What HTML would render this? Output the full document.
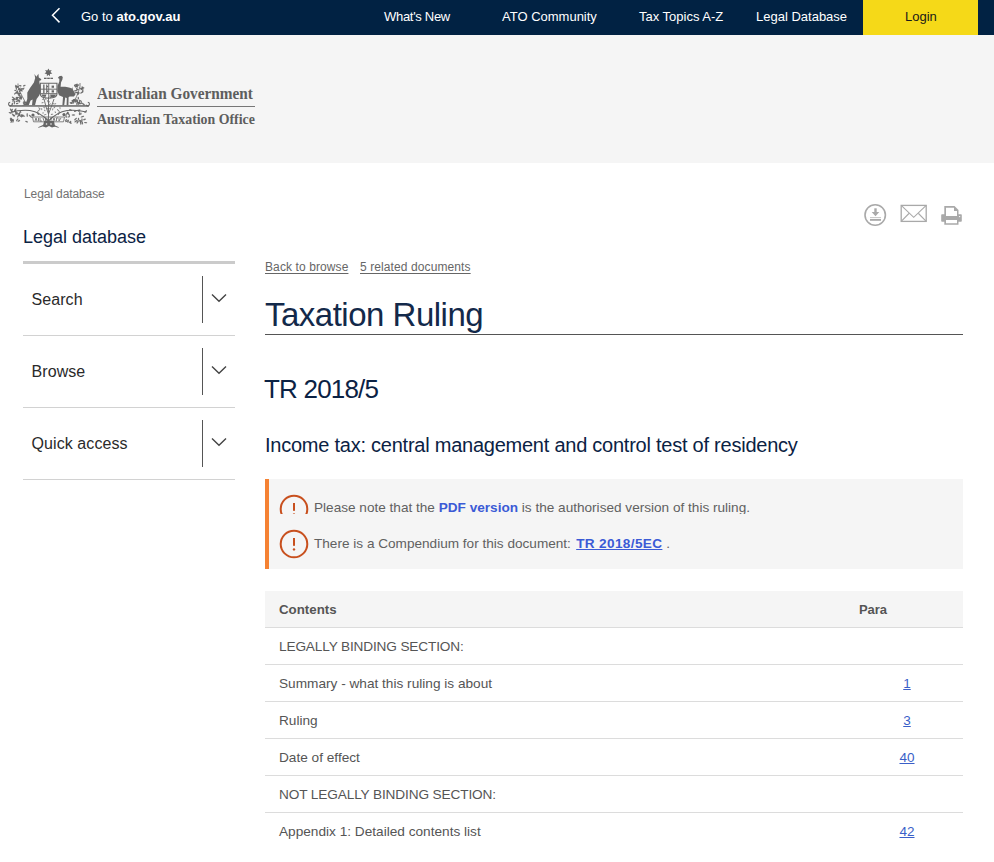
<!DOCTYPE html>
<html><head><meta charset="utf-8">
<style>
*{margin:0;padding:0;box-sizing:border-box}
html,body{width:994px;height:862px;overflow:hidden;background:#fff;font-family:"Liberation Sans",sans-serif;color:#333}
.abs{position:absolute;white-space:nowrap;line-height:1}
#nav{position:absolute;left:0;top:0;width:994px;height:35px;background:#012243}
#nav .t{position:absolute;top:10px;font-size:13px;color:#fff;line-height:13px;white-space:nowrap}
#login{position:absolute;left:863px;top:0;width:115px;height:35px;background:#f5d918}
#hdr{position:absolute;left:0;top:35px;width:994px;height:128px;background:#f5f5f5}
.acc{position:absolute;left:23px;width:212px;height:72px;border-bottom:1px solid #d2d2d2}
.acc .l{position:absolute;left:8.5px;top:28px;font-size:16px;color:#2a2a2a;letter-spacing:0.08px;line-height:16px;white-space:nowrap}
.acc .v{position:absolute;left:179px;top:12px;width:1px;height:47px;background:#555}
.acc svg{position:absolute;left:188px;top:29px}
.row{position:absolute;left:265px;width:698px;height:37px;border-bottom:1px solid #dcdcdc}
.row .c{position:absolute;left:14px;top:12px;font-size:13.65px;color:#555;line-height:14px;white-space:nowrap}
.row .p{position:absolute;left:627px;top:12px;font-size:13.5px;color:#3a5fc8;line-height:14px;text-decoration:underline;width:30px;text-align:center}
.alert{position:absolute;left:314px;font-size:13.6px;color:#616161;line-height:14px;white-space:nowrap}
.alert b{color:#3b5bd6}
</style></head><body>
<div id="nav">
  <svg class="abs" style="left:50px;top:7px" width="12" height="17" viewBox="0 0 12 17"><path d="M9.5 1.2 L2.5 8.3 L9.5 15.4" fill="none" stroke="#fff" stroke-width="1.5"/></svg>
  <div class="t" style="left:81px">Go to <b>ato.gov.au</b></div>
  <div class="t" style="left:384px;letter-spacing:-0.3px">What's New</div>
  <div class="t" style="left:502px">ATO Community</div>
  <div class="t" style="left:639px">Tax Topics A-Z</div>
  <div class="t" style="left:756px">Legal Database</div>
  <div id="login"><div class="t" style="left:42px;color:#1a1a1a">Login</div></div>
</div>
<div id="hdr">
  <svg class="abs" style="left:0;top:25px" width="100" height="75" viewBox="0 60 100 75">
 <g fill="#666">
  <polygon points="48.4,68.5 49.5,70.6 51.7,70.1 50.5,72.1 52.3,73.6 50,74 49.9,76.3 48.4,74.7 46.9,76.3 46.8,74 44.5,73.6 46.3,72.1 45.1,70.1 47.3,70.6"/>
  <rect x="44" y="77.7" width="2.6" height="1.3"/><rect x="47.2" y="77.7" width="2.6" height="1.3"/><rect x="50.4" y="77.7" width="2.6" height="1.3"/>
  <path d="M34.4,74 L36.4,76.8 L38.4,73.8 L38.8,77.4 L41.4,79.3 L40.6,80.4 L39.4,80.8 L39.4,83.2 L40.4,86 L40.6,92 L39.2,95.5 L36.6,99 L35,105.3 L32,105.3 L32.6,99.6 L30.6,100.4 L28.7,105.3 L22,105.6 L25.9,103 L27.3,99 L27.3,92.6 L30,88 L33.9,82.5 L35.2,78 Z"/>
  <path d="M57.8,78 L59.2,76.2 L61.4,75.8 L62.8,77 L62.4,79.6 L61,82.6 L60.6,86.8 L65.2,86.7 L69,87.4 L72.2,88.6 L72.4,86.4 L72.9,89.4 L75.5,94.4 L73.9,96.4 L69.7,96.6 L68.6,97.2 L68.4,105.3 L66.6,105.3 L66.8,98 L65.2,97.6 L64.2,105.3 L62.4,105.3 L63,97 L59,95.2 L57.3,91 L57.5,86 L59.3,81.6 L59.3,78.7 Z"/>
  <rect x="9.5" y="105.2" width="79.4" height="1.5"/>
  <path d="M44,121 L54,121 L55,126.5 L52,127.5 L49,126 L46,127.5 L43,126.5 Z"/>
  <path d="M44,124.5 L38,127.2 L38.6,127.8 L45,125.8 Z M53,124.5 L59,127.2 L58.4,127.8 L52,125.8 Z"/>
  <ellipse cx="18.08" cy="86.89" rx="1.25" ry="0.70" transform="rotate(117 18.08 86.89)" opacity="0.9"/>
<ellipse cx="20.09" cy="89.57" rx="1.62" ry="0.70" transform="rotate(10 20.09 89.57)" opacity="0.9"/>
<ellipse cx="15.36" cy="90.42" rx="1.27" ry="0.70" transform="rotate(13 15.36 90.42)" opacity="0.9"/>
<ellipse cx="19.03" cy="95.34" rx="1.38" ry="0.70" transform="rotate(22 19.03 95.34)" opacity="0.9"/>
<ellipse cx="20.96" cy="96.85" rx="1.53" ry="0.70" transform="rotate(104 20.96 96.85)" opacity="0.9"/>
<ellipse cx="24.27" cy="85.58" rx="1.44" ry="0.70" transform="rotate(155 24.27 85.58)" opacity="0.9"/>
<ellipse cx="16.37" cy="86.47" rx="1.88" ry="0.70" transform="rotate(56 16.37 86.47)" opacity="0.9"/>
<ellipse cx="16.72" cy="92.27" rx="1.51" ry="0.70" transform="rotate(115 16.72 92.27)" opacity="0.9"/>
<ellipse cx="20.20" cy="85.78" rx="1.37" ry="0.70" transform="rotate(11 20.20 85.78)" opacity="0.9"/>
<ellipse cx="21.46" cy="90.34" rx="1.69" ry="0.70" transform="rotate(57 21.46 90.34)" opacity="0.9"/>
<ellipse cx="19.31" cy="88.75" rx="1.78" ry="0.70" transform="rotate(143 19.31 88.75)" opacity="0.9"/>
<ellipse cx="17.32" cy="92.18" rx="1.93" ry="0.70" transform="rotate(95 17.32 92.18)" opacity="0.9"/>
<ellipse cx="21.93" cy="88.60" rx="1.29" ry="0.70" transform="rotate(176 21.93 88.60)" opacity="0.9"/>
<ellipse cx="18.97" cy="94.46" rx="1.61" ry="0.70" transform="rotate(27 18.97 94.46)" opacity="0.9"/>
<ellipse cx="15.37" cy="93.35" rx="1.68" ry="0.70" transform="rotate(138 15.37 93.35)" opacity="0.9"/>
<ellipse cx="23.32" cy="88.92" rx="1.70" ry="0.70" transform="rotate(125 23.32 88.92)" opacity="0.9"/>
<ellipse cx="20.51" cy="90.70" rx="1.99" ry="0.70" transform="rotate(151 20.51 90.70)" opacity="0.9"/>
<ellipse cx="19.50" cy="93.30" rx="1.79" ry="0.70" transform="rotate(11 19.50 93.30)" opacity="0.9"/>
<ellipse cx="21.15" cy="97.41" rx="1.43" ry="0.70" transform="rotate(148 21.15 97.41)" opacity="0.9"/>
<ellipse cx="18.67" cy="93.36" rx="1.58" ry="0.70" transform="rotate(4 18.67 93.36)" opacity="0.9"/>
<ellipse cx="16.60" cy="86.46" rx="1.84" ry="0.70" transform="rotate(11 16.60 86.46)" opacity="0.9"/>
<ellipse cx="16.23" cy="88.10" rx="1.93" ry="0.70" transform="rotate(70 16.23 88.10)" opacity="0.9"/>
<ellipse cx="13.17" cy="100.28" rx="1.94" ry="0.70" transform="rotate(99 13.17 100.28)" opacity="0.9"/>
<ellipse cx="23.88" cy="103.31" rx="1.54" ry="0.70" transform="rotate(50 23.88 103.31)" opacity="0.9"/>
<ellipse cx="17.20" cy="103.45" rx="1.32" ry="0.70" transform="rotate(172 17.20 103.45)" opacity="0.9"/>
<ellipse cx="14.56" cy="98.69" rx="1.60" ry="0.70" transform="rotate(42 14.56 98.69)" opacity="0.9"/>
<ellipse cx="20.54" cy="98.92" rx="1.55" ry="0.70" transform="rotate(1 20.54 98.92)" opacity="0.9"/>
<ellipse cx="17.35" cy="101.13" rx="1.78" ry="0.70" transform="rotate(172 17.35 101.13)" opacity="0.9"/>
<ellipse cx="19.47" cy="101.51" rx="1.24" ry="0.70" transform="rotate(122 19.47 101.51)" opacity="0.9"/>
<ellipse cx="25.04" cy="102.69" rx="1.87" ry="0.70" transform="rotate(157 25.04 102.69)" opacity="0.9"/>
<ellipse cx="17.69" cy="99.91" rx="1.73" ry="0.70" transform="rotate(19 17.69 99.91)" opacity="0.9"/>
<ellipse cx="12.90" cy="97.49" rx="1.33" ry="0.70" transform="rotate(38 12.90 97.49)" opacity="0.9"/>
<ellipse cx="16.93" cy="97.38" rx="1.32" ry="0.70" transform="rotate(0 16.93 97.38)" opacity="0.9"/>
<ellipse cx="13.47" cy="99.65" rx="1.93" ry="0.70" transform="rotate(5 13.47 99.65)" opacity="0.9"/>
<ellipse cx="20.90" cy="98.08" rx="1.49" ry="0.70" transform="rotate(45 20.90 98.08)" opacity="0.9"/>
<ellipse cx="17.28" cy="97.90" rx="2.03" ry="0.70" transform="rotate(153 17.28 97.90)" opacity="0.9"/>
<ellipse cx="18.76" cy="100.53" rx="1.28" ry="0.70" transform="rotate(15 18.76 100.53)" opacity="0.9"/>
<ellipse cx="16.97" cy="98.93" rx="1.33" ry="0.70" transform="rotate(149 16.97 98.93)" opacity="0.9"/>
<ellipse cx="12.33" cy="103.94" rx="1.31" ry="0.70" transform="rotate(95 12.33 103.94)" opacity="0.9"/>
<ellipse cx="19.88" cy="97.20" rx="2.02" ry="0.70" transform="rotate(95 19.88 97.20)" opacity="0.9"/>
<ellipse cx="24.52" cy="102.08" rx="1.50" ry="0.70" transform="rotate(47 24.52 102.08)" opacity="0.9"/>
<ellipse cx="14.42" cy="102.64" rx="1.85" ry="0.70" transform="rotate(96 14.42 102.64)" opacity="0.9"/>
<ellipse cx="77.64" cy="85.61" rx="2.03" ry="0.70" transform="rotate(146 77.64 85.61)" opacity="0.9"/>
<ellipse cx="81.82" cy="92.43" rx="1.82" ry="0.70" transform="rotate(147 81.82 92.43)" opacity="0.9"/>
<ellipse cx="76.81" cy="89.06" rx="1.21" ry="0.70" transform="rotate(64 76.81 89.06)" opacity="0.9"/>
<ellipse cx="75.22" cy="86.27" rx="1.78" ry="0.70" transform="rotate(47 75.22 86.27)" opacity="0.9"/>
<ellipse cx="82.65" cy="88.23" rx="2.03" ry="0.70" transform="rotate(169 82.65 88.23)" opacity="0.9"/>
<ellipse cx="82.64" cy="87.27" rx="1.38" ry="0.70" transform="rotate(40 82.64 87.27)" opacity="0.9"/>
<ellipse cx="76.57" cy="85.39" rx="1.96" ry="0.70" transform="rotate(112 76.57 85.39)" opacity="0.9"/>
<ellipse cx="81.72" cy="88.61" rx="1.87" ry="0.70" transform="rotate(118 81.72 88.61)" opacity="0.9"/>
<ellipse cx="75.68" cy="90.73" rx="1.85" ry="0.70" transform="rotate(164 75.68 90.73)" opacity="0.9"/>
<ellipse cx="81.00" cy="88.59" rx="1.86" ry="0.70" transform="rotate(32 81.00 88.59)" opacity="0.9"/>
<ellipse cx="77.66" cy="92.37" rx="1.53" ry="0.70" transform="rotate(175 77.66 92.37)" opacity="0.9"/>
<ellipse cx="78.21" cy="94.08" rx="1.33" ry="0.70" transform="rotate(130 78.21 94.08)" opacity="0.9"/>
<ellipse cx="76.02" cy="84.77" rx="1.88" ry="0.70" transform="rotate(163 76.02 84.77)" opacity="0.9"/>
<ellipse cx="76.17" cy="92.67" rx="1.75" ry="0.70" transform="rotate(176 76.17 92.67)" opacity="0.9"/>
<ellipse cx="77.80" cy="89.42" rx="1.20" ry="0.70" transform="rotate(24 77.80 89.42)" opacity="0.9"/>
<ellipse cx="82.77" cy="90.60" rx="1.98" ry="0.70" transform="rotate(95 82.77 90.60)" opacity="0.9"/>
<ellipse cx="78.47" cy="93.20" rx="1.37" ry="0.70" transform="rotate(149 78.47 93.20)" opacity="0.9"/>
<ellipse cx="77.01" cy="86.43" rx="1.69" ry="0.70" transform="rotate(43 77.01 86.43)" opacity="0.9"/>
<ellipse cx="74.63" cy="100.64" rx="1.96" ry="0.70" transform="rotate(24 74.63 100.64)" opacity="0.9"/>
<ellipse cx="75.95" cy="100.89" rx="1.96" ry="0.70" transform="rotate(105 75.95 100.89)" opacity="0.9"/>
<ellipse cx="76.89" cy="103.78" rx="1.64" ry="0.70" transform="rotate(90 76.89 103.78)" opacity="0.9"/>
<ellipse cx="78.33" cy="98.12" rx="1.35" ry="0.70" transform="rotate(79 78.33 98.12)" opacity="0.9"/>
<ellipse cx="71.06" cy="103.03" rx="1.59" ry="0.70" transform="rotate(31 71.06 103.03)" opacity="0.9"/>
<ellipse cx="81.15" cy="101.51" rx="1.63" ry="0.70" transform="rotate(59 81.15 101.51)" opacity="0.9"/>
<ellipse cx="78.78" cy="102.94" rx="1.67" ry="0.70" transform="rotate(19 78.78 102.94)" opacity="0.9"/>
<ellipse cx="74.48" cy="99.74" rx="1.62" ry="0.70" transform="rotate(139 74.48 99.74)" opacity="0.9"/>
<ellipse cx="78.86" cy="102.79" rx="1.57" ry="0.70" transform="rotate(164 78.86 102.79)" opacity="0.9"/>
<ellipse cx="79.58" cy="101.18" rx="1.78" ry="0.70" transform="rotate(92 79.58 101.18)" opacity="0.9"/>
<ellipse cx="77.33" cy="101.36" rx="1.99" ry="0.70" transform="rotate(86 77.33 101.36)" opacity="0.9"/>
<ellipse cx="80.79" cy="103.52" rx="1.41" ry="0.70" transform="rotate(170 80.79 103.52)" opacity="0.9"/>
<ellipse cx="78.83" cy="103.94" rx="1.31" ry="0.70" transform="rotate(151 78.83 103.94)" opacity="0.9"/>
<ellipse cx="72.70" cy="100.79" rx="1.39" ry="0.70" transform="rotate(13 72.70 100.79)" opacity="0.9"/>
<ellipse cx="72.02" cy="102.22" rx="1.95" ry="0.70" transform="rotate(141 72.02 102.22)" opacity="0.9"/>
<ellipse cx="73.16" cy="102.51" rx="1.31" ry="0.70" transform="rotate(119 73.16 102.51)" opacity="0.9"/>
<ellipse cx="83.36" cy="104.10" rx="2.00" ry="0.70" transform="rotate(40 83.36 104.10)" opacity="0.9"/>
<ellipse cx="76.58" cy="101.07" rx="1.90" ry="0.70" transform="rotate(178 76.58 101.07)" opacity="0.9"/>
<ellipse cx="73.26" cy="100.72" rx="1.48" ry="0.70" transform="rotate(93 73.26 100.72)" opacity="0.9"/>
<ellipse cx="73.74" cy="100.01" rx="1.21" ry="0.70" transform="rotate(130 73.74 100.01)" opacity="0.9"/>
<ellipse cx="21.64" cy="115.01" rx="1.56" ry="0.70" transform="rotate(3 21.64 115.01)" opacity="0.9"/>
<ellipse cx="23.10" cy="115.90" rx="2.15" ry="0.70" transform="rotate(12 23.10 115.90)" opacity="0.9"/>
<ellipse cx="26.56" cy="121.65" rx="1.50" ry="0.70" transform="rotate(19 26.56 121.65)" opacity="0.9"/>
<ellipse cx="10.83" cy="119.24" rx="1.38" ry="0.70" transform="rotate(49 10.83 119.24)" opacity="0.9"/>
<ellipse cx="18.87" cy="120.89" rx="1.49" ry="0.70" transform="rotate(147 18.87 120.89)" opacity="0.9"/>
<ellipse cx="13.14" cy="120.99" rx="1.89" ry="0.70" transform="rotate(103 13.14 120.99)" opacity="0.9"/>
<ellipse cx="11.88" cy="110.22" rx="1.64" ry="0.70" transform="rotate(124 11.88 110.22)" opacity="0.9"/>
<ellipse cx="11.52" cy="121.23" rx="1.98" ry="0.70" transform="rotate(114 11.52 121.23)" opacity="0.9"/>
<ellipse cx="11.76" cy="120.20" rx="2.04" ry="0.70" transform="rotate(12 11.76 120.20)" opacity="0.9"/>
<ellipse cx="19.53" cy="113.74" rx="2.09" ry="0.70" transform="rotate(100 19.53 113.74)" opacity="0.9"/>
<ellipse cx="15.63" cy="111.12" rx="1.47" ry="0.70" transform="rotate(95 15.63 111.12)" opacity="0.9"/>
<ellipse cx="12.30" cy="111.52" rx="1.44" ry="0.70" transform="rotate(9 12.30 111.52)" opacity="0.9"/>
<ellipse cx="16.55" cy="113.31" rx="1.52" ry="0.70" transform="rotate(137 16.55 113.31)" opacity="0.9"/>
<ellipse cx="20.50" cy="111.72" rx="1.28" ry="0.70" transform="rotate(62 20.50 111.72)" opacity="0.9"/>
<ellipse cx="15.26" cy="109.69" rx="1.76" ry="0.70" transform="rotate(132 15.26 109.69)" opacity="0.9"/>
<ellipse cx="13.98" cy="115.43" rx="1.36" ry="0.70" transform="rotate(168 13.98 115.43)" opacity="0.9"/>
<ellipse cx="27.20" cy="114.90" rx="2.01" ry="0.70" transform="rotate(89 27.20 114.90)" opacity="0.9"/>
<ellipse cx="18.25" cy="115.83" rx="2.14" ry="0.70" transform="rotate(124 18.25 115.83)" opacity="0.9"/>
<ellipse cx="17.20" cy="119.90" rx="1.83" ry="0.70" transform="rotate(127 17.20 119.90)" opacity="0.9"/>
<ellipse cx="18.50" cy="113.84" rx="1.38" ry="0.70" transform="rotate(10 18.50 113.84)" opacity="0.9"/>
<ellipse cx="11.49" cy="118.76" rx="1.41" ry="0.70" transform="rotate(46 11.49 118.76)" opacity="0.9"/>
<ellipse cx="11.77" cy="120.02" rx="1.86" ry="0.70" transform="rotate(157 11.77 120.02)" opacity="0.9"/>
<ellipse cx="15.92" cy="112.53" rx="1.67" ry="0.70" transform="rotate(53 15.92 112.53)" opacity="0.9"/>
<ellipse cx="13.31" cy="115.07" rx="2.13" ry="0.70" transform="rotate(47 13.31 115.07)" opacity="0.9"/>
<ellipse cx="30.43" cy="116.34" rx="2.13" ry="0.70" transform="rotate(44 30.43 116.34)" opacity="0.9"/>
<ellipse cx="16.50" cy="113.96" rx="1.60" ry="0.70" transform="rotate(0 16.50 113.96)" opacity="0.9"/>
<ellipse cx="19.97" cy="115.78" rx="1.71" ry="0.70" transform="rotate(36 19.97 115.78)" opacity="0.9"/>
<ellipse cx="10.10" cy="112.80" rx="1.62" ry="0.70" transform="rotate(16 10.10 112.80)" opacity="0.9"/>
<ellipse cx="10.88" cy="109.78" rx="1.47" ry="0.70" transform="rotate(55 10.88 109.78)" opacity="0.9"/>
<ellipse cx="22.30" cy="116.11" rx="1.85" ry="0.70" transform="rotate(135 22.30 116.11)" opacity="0.9"/>
<ellipse cx="80.32" cy="121.81" rx="1.55" ry="0.70" transform="rotate(70 80.32 121.81)" opacity="0.9"/>
<ellipse cx="85.69" cy="111.59" rx="1.84" ry="0.70" transform="rotate(130 85.69 111.59)" opacity="0.9"/>
<ellipse cx="66.88" cy="121.19" rx="1.82" ry="0.70" transform="rotate(161 66.88 121.19)" opacity="0.9"/>
<ellipse cx="80.68" cy="120.87" rx="1.73" ry="0.70" transform="rotate(25 80.68 120.87)" opacity="0.9"/>
<ellipse cx="76.09" cy="121.19" rx="2.00" ry="0.70" transform="rotate(145 76.09 121.19)" opacity="0.9"/>
<ellipse cx="77.68" cy="122.00" rx="1.88" ry="0.70" transform="rotate(123 77.68 122.00)" opacity="0.9"/>
<ellipse cx="70.60" cy="109.94" rx="1.58" ry="0.70" transform="rotate(24 70.60 109.94)" opacity="0.9"/>
<ellipse cx="68.10" cy="121.20" rx="1.82" ry="0.70" transform="rotate(101 68.10 121.20)" opacity="0.9"/>
<ellipse cx="78.52" cy="119.03" rx="1.26" ry="0.70" transform="rotate(88 78.52 119.03)" opacity="0.9"/>
<ellipse cx="81.95" cy="119.98" rx="1.74" ry="0.70" transform="rotate(91 81.95 119.98)" opacity="0.9"/>
<ellipse cx="79.19" cy="110.42" rx="1.49" ry="0.70" transform="rotate(133 79.19 110.42)" opacity="0.9"/>
<ellipse cx="67.49" cy="113.22" rx="1.44" ry="0.70" transform="rotate(131 67.49 113.22)" opacity="0.9"/>
<ellipse cx="80.80" cy="123.16" rx="1.60" ry="0.70" transform="rotate(89 80.80 123.16)" opacity="0.9"/>
<ellipse cx="75.58" cy="119.07" rx="1.82" ry="0.70" transform="rotate(138 75.58 119.07)" opacity="0.9"/>
<ellipse cx="78.86" cy="110.58" rx="1.49" ry="0.70" transform="rotate(27 78.86 110.58)" opacity="0.9"/>
<ellipse cx="80.86" cy="113.76" rx="1.27" ry="0.70" transform="rotate(102 80.86 113.76)" opacity="0.9"/>
<ellipse cx="67.21" cy="113.26" rx="1.88" ry="0.70" transform="rotate(121 67.21 113.26)" opacity="0.9"/>
<ellipse cx="79.51" cy="113.57" rx="1.68" ry="0.70" transform="rotate(93 79.51 113.57)" opacity="0.9"/>
<ellipse cx="75.33" cy="111.16" rx="1.44" ry="0.70" transform="rotate(161 75.33 111.16)" opacity="0.9"/>
<ellipse cx="85.56" cy="122.61" rx="1.67" ry="0.70" transform="rotate(3 85.56 122.61)" opacity="0.9"/>
<ellipse cx="82.40" cy="123.05" rx="1.50" ry="0.70" transform="rotate(81 82.40 123.05)" opacity="0.9"/>
<ellipse cx="70.20" cy="122.74" rx="1.78" ry="0.70" transform="rotate(38 70.20 122.74)" opacity="0.9"/>
<ellipse cx="68.83" cy="116.84" rx="1.38" ry="0.70" transform="rotate(171 68.83 116.84)" opacity="0.9"/>
<ellipse cx="82.40" cy="116.62" rx="1.89" ry="0.70" transform="rotate(160 82.40 116.62)" opacity="0.9"/>
<ellipse cx="70.63" cy="122.07" rx="1.28" ry="0.70" transform="rotate(88 70.63 122.07)" opacity="0.9"/>
<ellipse cx="66.07" cy="116.38" rx="1.53" ry="0.70" transform="rotate(81 66.07 116.38)" opacity="0.9"/>
<ellipse cx="68.81" cy="114.32" rx="2.02" ry="0.70" transform="rotate(57 68.81 114.32)" opacity="0.9"/>
<ellipse cx="66.03" cy="120.01" rx="1.37" ry="0.70" transform="rotate(151 66.03 120.01)" opacity="0.9"/>
<ellipse cx="84.53" cy="119.48" rx="1.52" ry="0.70" transform="rotate(162 84.53 119.48)" opacity="0.9"/>
<ellipse cx="73.44" cy="115.00" rx="1.79" ry="0.70" transform="rotate(180 73.44 115.00)" opacity="0.9"/>
<ellipse cx="44.74" cy="110.42" rx="0.94" ry="0.50" transform="rotate(50 44.74 110.42)" opacity="0.8"/>
<ellipse cx="37.75" cy="113.68" rx="1.52" ry="0.50" transform="rotate(51 37.75 113.68)" opacity="0.8"/>
<ellipse cx="41.73" cy="109.13" rx="1.03" ry="0.50" transform="rotate(92 41.73 109.13)" opacity="0.8"/>
<ellipse cx="45.08" cy="114.65" rx="1.44" ry="0.50" transform="rotate(159 45.08 114.65)" opacity="0.8"/>
<ellipse cx="52.03" cy="114.31" rx="1.27" ry="0.50" transform="rotate(169 52.03 114.31)" opacity="0.8"/>
<ellipse cx="54.43" cy="107.40" rx="1.20" ry="0.50" transform="rotate(132 54.43 107.40)" opacity="0.8"/>
<ellipse cx="55.32" cy="112.16" rx="0.94" ry="0.50" transform="rotate(52 55.32 112.16)" opacity="0.8"/>
<ellipse cx="60.02" cy="108.02" rx="1.13" ry="0.50" transform="rotate(85 60.02 108.02)" opacity="0.8"/>
<ellipse cx="43.04" cy="112.91" rx="1.08" ry="0.50" transform="rotate(176 43.04 112.91)" opacity="0.8"/>
<ellipse cx="52.71" cy="109.41" rx="1.17" ry="0.50" transform="rotate(100 52.71 109.41)" opacity="0.8"/>
<ellipse cx="39.52" cy="108.29" rx="1.50" ry="0.50" transform="rotate(37 39.52 108.29)" opacity="0.8"/>
<ellipse cx="48.42" cy="108.76" rx="1.56" ry="0.50" transform="rotate(163 48.42 108.76)" opacity="0.8"/>
<ellipse cx="47.15" cy="108.12" rx="0.97" ry="0.50" transform="rotate(35 47.15 108.12)" opacity="0.8"/>
<ellipse cx="44.23" cy="107.73" rx="1.08" ry="0.50" transform="rotate(43 44.23 107.73)" opacity="0.8"/>
<ellipse cx="49.97" cy="104.10" rx="1.18" ry="0.50" transform="rotate(135 49.97 104.10)" opacity="0.8"/>
<ellipse cx="47.79" cy="101.19" rx="1.13" ry="0.50" transform="rotate(68 47.79 101.19)" opacity="0.8"/>
<ellipse cx="42.87" cy="99.22" rx="0.99" ry="0.50" transform="rotate(174 42.87 99.22)" opacity="0.8"/>
<ellipse cx="49.05" cy="102.04" rx="1.05" ry="0.50" transform="rotate(155 49.05 102.04)" opacity="0.8"/>
<ellipse cx="45.79" cy="98.99" rx="1.20" ry="0.50" transform="rotate(72 45.79 98.99)" opacity="0.8"/>
<ellipse cx="55.36" cy="103.79" rx="0.92" ry="0.50" transform="rotate(157 55.36 103.79)" opacity="0.8"/>
<ellipse cx="42.45" cy="102.68" rx="1.22" ry="0.50" transform="rotate(161 42.45 102.68)" opacity="0.8"/>
<ellipse cx="50.22" cy="97.00" rx="1.51" ry="0.50" transform="rotate(70 50.22 97.00)" opacity="0.8"/>
<ellipse cx="53.56" cy="103.84" rx="1.07" ry="0.50" transform="rotate(175 53.56 103.84)" opacity="0.8"/>
<ellipse cx="43.53" cy="98.24" rx="1.35" ry="0.50" transform="rotate(94 43.53 98.24)" opacity="0.8"/>
 </g>
<g fill="#666">
  <rect x="43.2" y="84.5" width="1.3" height="8.8"/><rect x="46.2" y="84.5" width="1" height="8.8"/>
  <rect x="48.3" y="83.3" width="0.9" height="14.5"/>
  <rect x="40.3" y="88.7" width="16.7" height="0.9"/><rect x="40.3" y="93.2" width="16.7" height="0.9"/>
  <rect x="51.6" y="85.6" width="2.4" height="2.2"/><rect x="51.6" y="90.3" width="2.4" height="2.2"/>
  <rect x="47" y="85.8" width="1.2" height="1.4"/><rect x="47" y="90.5" width="1.2" height="1.6"/>
  <path d="M41.5,94.5 L46.5,94.5 L45.5,97 L42.5,96.5 Z M50,94.5 L56,94.5 L55,96.8 L51,97.4 Z"/>
 </g>
 <g fill="#f5f5f5"><circle cx="46.5" cy="124" r=".8"/><circle cx="51" cy="124" r=".8"/></g>
 <g fill="none" stroke="#666" stroke-width="1">
  <path d="M12,104.8 A1.8,1.8 0 1 1 10.2,102.3" stroke-width="1.1"/>
  <path d="M86,104.8 A1.8,1.8 0 1 0 87.8,102.3" stroke-width="1.1"/>
  <path d="M40.3,83.3 H57 V94 Q57,98 48.6,98.2 Q40.3,98 40.3,94 Z" stroke-width="1.1"/>
  <path d="M26,103.5 Q22,96 19,90 Q17.5,86.5 18,83.5" stroke-width="0.8"/>
  <path d="M73.5,103.5 Q77,96 79,90 Q80.5,86 80,83" stroke-width="0.8"/>
  <path d="M48.5,121 Q40,112 30,110.5 Q20,109.5 10.5,112.5" stroke-width="1.1"/>
  <path d="M48.5,121 Q57,112 67,110.5 Q77,109.5 86.5,112" stroke-width="1.1"/>
  <path d="M48.5,97 V121 M44,99 Q46,108 48.5,114 Q51,108 54,99" stroke-width="0.9"/>
  <path d="M39,115 Q36,111 40,109.5 M58,115 Q61,111 57,109.5" stroke-width="0.9"/>
  <path d="M32.5,117 H64.5 L63.5,121.8 H33.5 Z" stroke-width="0.8"/>
  <path d="M35,121 L36,118 L37,121 M38.5,121 V118 M40,118 V121 H42 M43,118 L44,121 M45.5,121 V118 L47,121 M48,118 V121 M50,118 H52 M51,118 V121 M53,121 L54,118 L55,121 M56.5,121 V118 H58 M59,118 V121 L61,118" stroke-width="0.8"/>
 </g>
 <g fill="#666"><circle cx="33" cy="115" r="1.6"/><circle cx="64" cy="114.6" r="1.6"/></g>
</svg>
  <div class="abs" style="left:96.5px;top:50px;font-family:'Liberation Serif',serif;font-weight:bold;font-size:17.5px;color:#5e5e5e;transform:scaleX(0.874);transform-origin:0 0">Australian Government</div>
  <div class="abs" style="left:97px;top:71px;width:158px;height:1.3px;background:#777"></div>
  <div class="abs" style="left:96.5px;top:77px;font-family:'Liberation Serif',serif;font-weight:bold;font-size:14.5px;color:#5e5e5e;transform:scaleX(0.956);transform-origin:0 0">Australian Taxation Office</div>
</div>

<div class="abs" style="left:24px;top:188px;font-size:12px;color:#727272;letter-spacing:-0.1px">Legal database</div>
<div class="abs" style="left:23px;top:228px;font-size:18px;color:#0b2244">Legal database</div>
<div class="abs" style="left:23px;top:261px;width:212px;height:3px;background:#cbcbcb"></div>

<div class="acc" style="top:264px"><div class="l">Search</div><div class="v"></div><svg width="16" height="10" viewBox="0 0 16 10"><path d="M1 1.5 L8 8.3 L15 1.5" fill="none" stroke="#444" stroke-width="1.4"/></svg></div>
<div class="acc" style="top:336px"><div class="l">Browse</div><div class="v"></div><svg width="16" height="10" viewBox="0 0 16 10"><path d="M1 1.5 L8 8.3 L15 1.5" fill="none" stroke="#444" stroke-width="1.4"/></svg></div>
<div class="acc" style="top:408px"><div class="l">Quick access</div><div class="v"></div><svg width="16" height="10" viewBox="0 0 16 10"><path d="M1 1.5 L8 8.3 L15 1.5" fill="none" stroke="#444" stroke-width="1.4"/></svg></div>

<!-- tool icons -->
<svg class="abs" style="left:860px;top:198px" width="110" height="34" viewBox="860 198 110 34">
  <g fill="none" stroke="#a9a9a9">
    <circle cx="875.2" cy="215" r="10.2" stroke-width="1.6"/>
    <rect x="901.2" y="205.4" width="25" height="16" stroke-width="1.3"/>
    <path d="M901.2,205.4 L913.7,217.3 L926.2,205.4 M901.2,221.4 L908.9,213.5 M926.2,221.4 L918.5,213.5" stroke-width="1.1"/>
  </g>
  <g fill="#a9a9a9">
    <rect x="874.3" y="208.3" width="2.4" height="4.5"/>
    <polygon points="871.7,212.1 879.3,212.1 875.5,216.2"/>
    <rect x="870" y="217" width="11" height="1.1" opacity=".6"/>
    <rect x="870" y="219" width="11" height="1.8"/>
    <path d="M944.3,206 L954.5,206 L958.5,210 L958.5,214.2 L961,214.2 Q961.8,214.2 961.8,215 L961.8,221 Q961.8,221.7 961,221.7 L958.5,221.7 L958.5,224.8 L944.3,224.8 L944.3,221.7 L942,221.7 Q941.2,221.7 941.2,221 L941.2,215 Q941.2,214.2 942,214.2 L944.3,214.2 Z M946,207.7 L946,216 L957,216 L957,211 L954,211 L954,207.7 Z M946,219.9 L946,223.3 L957,223.3 L957,219.9 Z"/>
  </g>
  <circle cx="959.6" cy="216.6" r=".7" fill="#fff"/>
</svg>

<div class="abs" style="left:265px;top:261px;font-size:12px;color:#666;text-decoration:underline;text-underline-offset:2px;letter-spacing:0.1px">Back to browse</div>
<div class="abs" style="left:360px;top:261px;font-size:12px;color:#666;text-decoration:underline;text-underline-offset:2px;letter-spacing:0.1px">5 related documents</div>
<div class="abs" style="left:265px;top:298px;font-size:33px;color:#13294a;letter-spacing:-0.5px">Taxation Ruling</div>
<div class="abs" style="left:265px;top:334px;width:698px;height:1px;background:#555"></div>
<div class="abs" style="left:264px;top:376px;font-size:26px;color:#0b2244;letter-spacing:-0.8px">TR 2018/5</div>
<div class="abs" style="left:265px;top:435px;font-size:20px;letter-spacing:-0.24px;color:#0b2244">Income tax: central management and control test of residency</div>

<!-- alert -->
<div class="abs" style="left:265px;top:479px;width:698px;height:90px;background:#f5f5f5;border-left:4px solid #f58233"></div>
<div class="abs" style="left:265px;top:479px;width:698px;height:35px;overflow:hidden">
  <svg class="abs" style="left:14px;top:15px" width="30" height="30" viewBox="0 0 30 30"><circle cx="15" cy="15" r="13.3" fill="none" stroke="#c8501e" stroke-width="2"/><rect x="14" y="9" width="2" height="7.8" fill="#c8501e"/><circle cx="15" cy="20.4" r="1.2" fill="#c8501e"/></svg>
  <div class="alert" style="left:49px;top:22px">Please note that the <b>PDF version</b> is the authorised version of this ruling.</div>
</div>
<svg class="abs" style="left:279px;top:529px" width="30" height="30" viewBox="0 0 30 30"><circle cx="15" cy="15" r="13.3" fill="none" stroke="#c8501e" stroke-width="2"/><rect x="14" y="9" width="2" height="7.8" fill="#c8501e"/><circle cx="15" cy="20.4" r="1.2" fill="#c8501e"/></svg>
<div class="alert" style="top:537px">There is a Compendium for this document: <b style="text-decoration:underline;letter-spacing:0.35px;margin-left:1.5px">TR 2018/5EC</b> .</div>

<!-- table -->
<div class="row" style="top:591px;background:#f5f5f5;height:37px"><div class="c" style="font-weight:bold;color:#555;font-size:13.3px">Contents</div><div class="c" style="left:594px;font-weight:bold;color:#555;font-size:13px;letter-spacing:-0.1px">Para</div></div>
<div class="row" style="top:628px"><div class="c" style="letter-spacing:-0.15px">LEGALLY BINDING SECTION:</div></div>
<div class="row" style="top:665px"><div class="c">Summary - what this ruling is about</div><div class="p">1</div></div>
<div class="row" style="top:702px"><div class="c">Ruling</div><div class="p">3</div></div>
<div class="row" style="top:739px"><div class="c">Date of effect</div><div class="p">40</div></div>
<div class="row" style="top:776px"><div class="c" style="letter-spacing:-0.13px">NOT LEGALLY BINDING SECTION:</div></div>
<div class="row" style="top:813px;border-bottom:none"><div class="c">Appendix 1: Detailed contents list</div><div class="p">42</div></div>
</body></html>
